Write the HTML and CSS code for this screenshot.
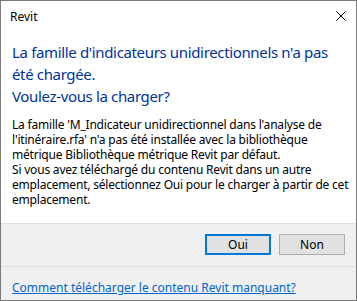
FILE: index.html
```html
<!DOCTYPE html>
<html lang="fr">
<head>
    <meta charset="UTF-8">
    <title>Revit</title>
    <link rel="stylesheet" href="styles.css">
</head>
<body>
    <div class="dialog">
        <div class="titlebar">
            <span class="title">Revit</span>
            <svg class="close" width="10" height="10" viewBox="0 0 10 10">
                <path d="M0.5 0.5 L9.5 9.5 M9.5 0.5 L0.5 9.5" stroke="#000" stroke-width="1" fill="none"/>
            </svg>
        </div>
        <div class="content">
            <h1 class="instruction">La famille d'indicateurs unidirectionnels n'a pas été chargée.<br>Voulez-vous la charger?</h1>
            <p class="message">La famille 'M_Indicateur unidirectionnel dans l'analyse de l'itinéraire.rfa' n'a pas été installée avec la bibliothèque métrique Bibliothèque métrique Revit par défaut.<br>Si vous avez téléchargé du contenu Revit dans un autre emplacement, sélectionnez Oui pour le charger à partir de cet emplacement.</p>
        </div>
        <div class="buttons">
            <button class="btn btn-default">Oui</button>
            <button class="btn">Non</button>
        </div>
        <div class="footer">
            <a href="#" class="help-link">Comment télécharger le contenu Revit manquant?</a>
        </div>
    </div>
</body>
</html>
```

FILE: styles.css
```css
* {
    box-sizing: border-box;
    margin: 0;
    padding: 0;
}

body {
    font-family: 'Noto Sans', 'Open Sans', sans-serif;
    background-color: #ffffff;
}

.dialog {
    width: 357px;
    height: 301px;
    border: 1px solid #7a7a7a;
    display: flex;
    flex-direction: column;
    background-color: #f0f0f0;
}

.titlebar {
    height: 30px;
    background-color: #ffffff;
    display: flex;
    align-items: center;
    justify-content: space-between;
    padding: 0 10px 0 9px;
}

.title {
    font-size: 12px;
    color: #000000;
}

.close {
    display: block;
}

.content {
    background-color: #ffffff;
    padding: 10px 3px 0 11px;
    height: 192px;
}

.instruction {
    font-size: 15px;
    font-weight: 400;
    line-height: 22px;
    letter-spacing: -0.35px;
    color: #003399;
    margin: 0 6px 10px 0;
}

.message {
    font-size: 12px;
    line-height: 15px;
    letter-spacing: -0.2px;
    color: #000000;
}

.buttons {
    border-top: 1px solid #dfdfdf;
    display: flex;
    justify-content: flex-end;
    gap: 8px;
    padding: 10px 11px 10px 0;
    height: 43px;
}

.btn {
    width: 66px;
    height: 21px;
    font-family: inherit;
    font-size: 12px;
    color: #000000;
    background-color: #e1e1e1;
    border: 1px solid #adadad;
}

.btn-default {
    border: 2px solid #0078d7;
}

.footer {
    border-top: 1px solid #dfdfdf;
    padding: 8px 11px 0;
    flex: 1;
}

.help-link {
    font-size: 12px;
    color: #0066cc;
}
```
